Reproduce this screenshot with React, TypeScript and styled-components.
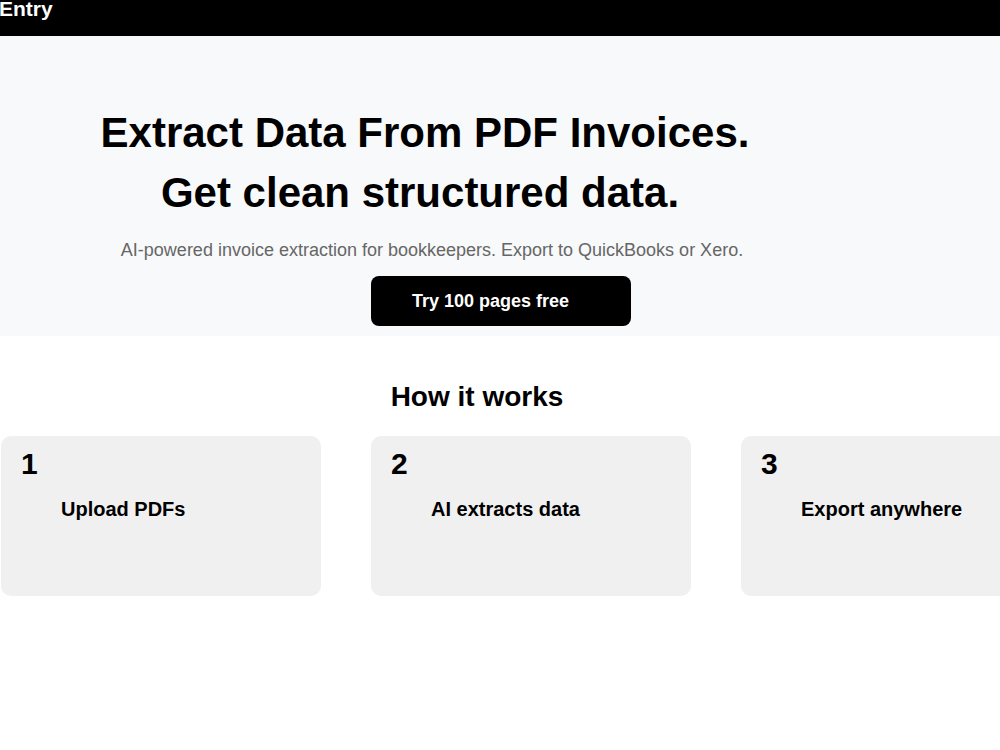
import React from 'react';
import styled, { createGlobalStyle } from 'styled-components';

const GlobalStyle = createGlobalStyle`
  html, body {
    margin: 0;
    padding: 0;
    background: #ffffff;
    overflow: hidden;
  }
  body {
    font-family: "Liberation Sans", Arial, sans-serif;
    color: #000;
  }
`;

const Page = styled.div`
  width: 1000px;
  min-height: 750px;
  overflow: hidden;
`;

const TopBar = styled.header`
  height: 36px;
  background: #000;
  display: flex;
  align-items: flex-start;
  overflow: hidden;
`;

const Brand = styled.div`
  color: #fff;
  font-weight: 700;
  font-size: 21px;
  line-height: 21px;
  margin: -2px 0 0 -1px;
  white-space: nowrap;
`;

const Hero = styled.section`
  background: #f8f9fa;
  padding: 67px 0 10px;
  display: flex;
  flex-direction: column;
`;

const Headline = styled.h1`
  width: 850px;
  margin: 0;
  font-size: 42px;
  line-height: 60px;
  font-weight: 700;
  text-align: center;
`;

const HeadlineRow = styled.span<{ $shift?: number }>`
  display: block;
  padding-right: ${p => p.$shift ?? 0}px;
`;

const Tagline = styled.p`
  width: 864px;
  margin: 17px 0 0;
  font-size: 18px;
  color: #666;
  text-align: center;
`;

const CtaButton = styled.button`
  margin: 15px 0 0 371px;
  width: 260px;
  height: 50px;
  padding: 0 0 0 41px;
  border: none;
  border-radius: 8px;
  background: #000;
  color: #fff;
  font-family: inherit;
  font-size: 18px;
  font-weight: 700;
  text-align: left;
  cursor: pointer;
`;

const Steps = styled.section`
  padding: 45px 0 0;
`;

const SectionTitle = styled.h2`
  width: 954px;
  margin: 0 0 23px;
  font-size: 28px;
  font-weight: 700;
  text-align: center;
`;

const StepGrid = styled.div`
  display: grid;
  grid-template-columns: repeat(3, 320px);
  gap: 50px;
  margin-left: 1px;
`;

const StepCard = styled.div`
  height: 160px;
  box-sizing: border-box;
  padding: 11px 20px;
  background: #f0f0f0;
  border-radius: 10px;
`;

const StepNumber = styled.div`
  font-size: 30px;
  font-weight: 700;
`;

const StepTitle = styled.h3`
  margin: 17px 0 0 40px;
  font-size: 20px;
  font-weight: 700;
`;

const steps = ['Upload PDFs', 'AI extracts data', 'Export anywhere'];

export default function App() {
  return (
    <Page>
      <GlobalStyle />
      <TopBar>
        <Brand>Entry</Brand>
      </TopBar>
      <Hero>
        <Headline>
          <HeadlineRow>Extract Data From PDF Invoices.</HeadlineRow>
          <HeadlineRow $shift={10}>Get clean structured data.</HeadlineRow>
        </Headline>
        <Tagline>
          AI-powered invoice extraction for bookkeepers. Export to QuickBooks or Xero.
        </Tagline>
        <CtaButton>Try 100 pages free</CtaButton>
      </Hero>
      <Steps>
        <SectionTitle>How it works</SectionTitle>
        <StepGrid>
          {steps.map((title, i) => (
            <StepCard key={title}>
              <StepNumber>{i + 1}</StepNumber>
              <StepTitle>{title}</StepTitle>
            </StepCard>
          ))}
        </StepGrid>
      </Steps>
    </Page>
  );
}
